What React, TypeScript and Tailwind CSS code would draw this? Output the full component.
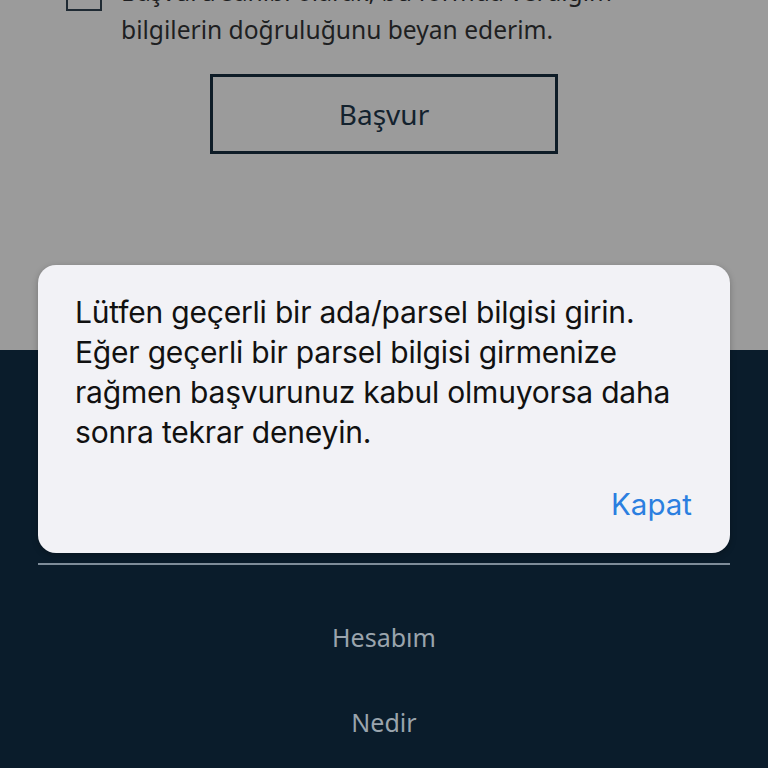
import { Check } from 'lucide-react'

export default function App() {
  return (
    <div className="relative h-[768px] w-[768px] overflow-hidden bg-[#0a1c2b]">
      <section className="flex h-[350px] flex-col bg-[#9b9b9b] font-['Noto_Sans',sans-serif]">
        <div className="mt-[-27px] flex gap-[19px] pl-[66px] pr-[40px]">
          <div className="mt-[2px] flex h-[36px] w-[36px] shrink-0 items-center justify-center border-2 border-[#1f2a33]">
            <Check className="h-5 w-5 text-[#1f2a33]" strokeWidth={3} />
          </div>
          <p className="text-[24.6px] leading-[38px] text-[#1e1f22]">
            Başvuru sahibi olarak, bu formda verdiğim
            <br />
            bilgilerin doğruluğunu beyan ederim.
          </p>
        </div>
        <button className="mx-auto mt-[25px] flex h-[80px] w-[348px] items-center justify-center border-[3px] border-[#0e1c27] text-[28px] text-[#13222e]">
          Başvur
        </button>
      </section>

      <nav className="flex flex-col items-center px-[38px] pt-[213px] font-['Noto_Sans',sans-serif]">
        <div className="h-[2px] w-full bg-[#7e8c99]" />
        <a className="mt-[54px] text-[25px] text-[#9aa4ad]">Hesabım</a>
        <a className="mt-[47px] text-[25px] text-[#9aa4ad]">Nedir</a>
      </nav>

      <div className="absolute left-[38px] top-[265px] flex h-[288px] w-[692px] flex-col rounded-[18px] bg-[#f2f2f6] px-[37px] pt-[27px] font-['Inter',sans-serif] shadow-[0_2px_6px_rgba(0,0,0,0.25)]">
        <p className="text-[30px] leading-[40px] tracking-[-0.2px] text-[#111]">
          Lütfen geçerli bir ada/parsel bilgisi girin.
          <br />
          Eğer geçerli bir parsel bilgisi girmenize
          <br />
          rağmen başvurunuz kabul olmuyorsa daha
          <br />
          sonra tekrar deneyin.
        </p>
        <button className="mt-auto mb-[27px] self-end pr-[1px] text-[29.5px] text-[#2b7fe0]">Kapat</button>
      </div>
    </div>
  )
}
